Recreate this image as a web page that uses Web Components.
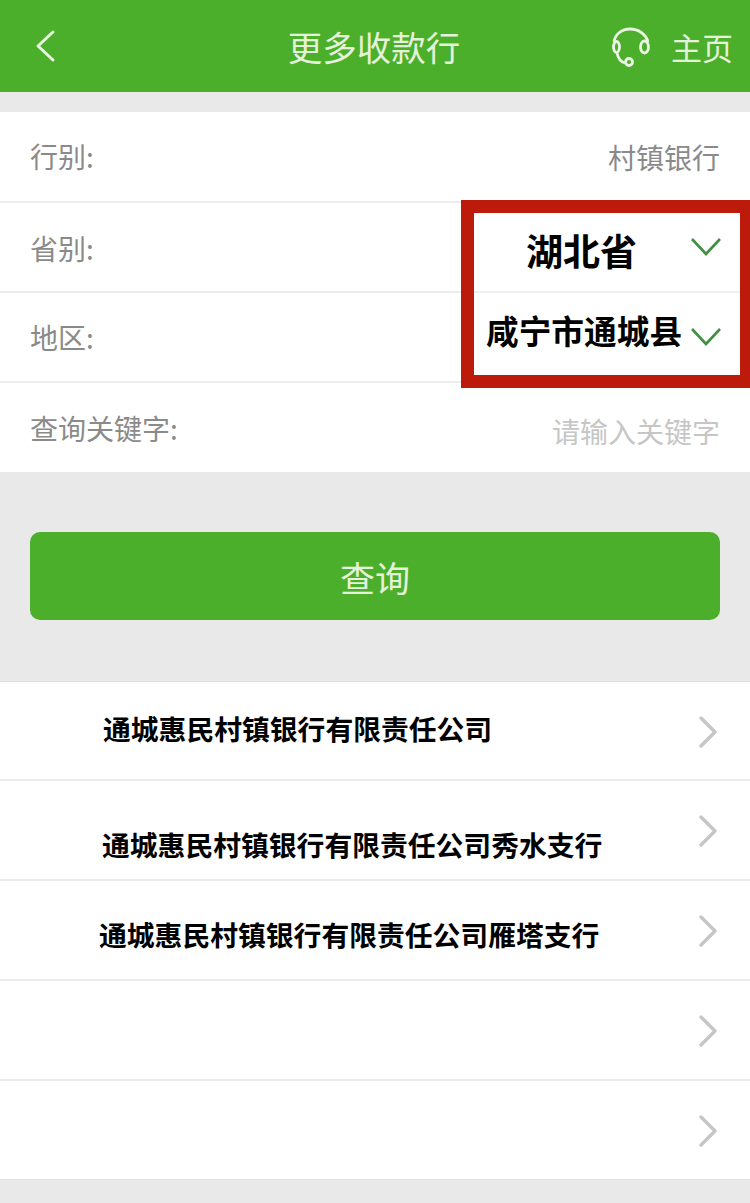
<!DOCTYPE html>
<html lang="zh"><head><meta charset="utf-8"><title>更多收款行</title>
<style>
html,body{margin:0;padding:0;background:#e9e9e9;font-family:"Noto Sans CJK SC","Noto Sans",sans-serif;overflow:hidden}
body{width:750px;height:1203px}
</style></head><body>
<bank-page>
  <app-bar slot="bar" home="主页">更多收款行</app-bar>
  <form-card slot="form">
    <form-row style="--h:89px;--drop:2px" label="行别:" value="村镇银行"></form-row>
    <form-row style="--h:90px;--lift:2px" label="省别:" ruled></form-row>
    <form-row style="--h:90px" label="地区:" ruled></form-row>
    <form-row style="--h:91px" label="查询关键字:" value="请输入关键字" placeholder ruled></form-row>
    <region-callout slot="over" province="湖北省" area="咸宁市通城县"></region-callout>
  </form-card>
  <query-button slot="action">查询</query-button>
  <bank-list slot="list">
    <bank-row style="--h:97px;--shift:-6px;--pad:103px">通城惠民村镇银行有限责任公司</bank-row>
    <bank-row style="--h:98px;--shift:28px;--pad:102px">通城惠民村镇银行有限责任公司秀水支行</bank-row>
    <bank-row style="--h:98px;--shift:8px;--pad:99px">通城惠民村镇银行有限责任公司雁塔支行</bank-row>
    <bank-row style="--h:98px"></bank-row>
    <bank-row style="--h:98px" last></bank-row>
  </bank-list>
</bank-page>
<script>
const def=(name,css,html)=>{customElements.define(name,class extends HTMLElement{
  connectedCallback(){ if(this.shadowRoot)return; const r=this.attachShadow({mode:'open'});
    r.innerHTML='<style>'+css+'</style>'+(typeof html==='function'?html(this):html); }
});};
def('bank-page',`:host{display:block;width:750px;height:1203px;background:#e9e9e9}
 .gap1{height:20px}.gap2{height:60px}.gap3{height:61px}`,
 `<slot name="bar"></slot><div class="gap1"></div><slot name="form"></slot><div class="gap2"></div><slot name="action"></slot><div class="gap3"></div><slot name="list"></slot>`);
def('app-bar',`:host{display:grid;grid-template-columns:1fr auto 1fr;align-items:center;height:92px;background:#4caf2b;color:#e4f2da;box-sizing:border-box;padding:0 17px}
 .t{font-size:34.5px;line-height:92px;font-weight:400;margin-left:-2px}
 .back{display:block;width:24px;height:34px;margin-left:16px}
 .r{justify-self:end;display:flex;align-items:center;gap:16px;font-size:31px}
 svg{display:block;fill:none;stroke:#e9f4e2}`,
 el=>`<svg class="back" viewBox="0 0 24 34"><path d="M20 3 5 17l15 14" stroke-width="3" stroke-linecap="round" stroke-linejoin="round"/></svg>
 <div class="t"><slot></slot></div>
 <div class="r"><svg width="44" height="44" viewBox="0 0 44 44" stroke-width="2.8"><path d="M3 18C4 10 11 5 19 5s16 5 18 13"/><ellipse cx="5.5" cy="23" rx="3" ry="5.5"/><ellipse cx="33.5" cy="23" rx="4" ry="6"/><path d="M6 29c1 5 4 9 8 10"/><circle cx="18" cy="38" r="3.5"/></svg><span>${el.getAttribute('home')}</span></div>`);
def('form-card',`:host{display:block;position:relative;background:#fff}`,`<slot></slot><slot name="over"></slot>`);
def('form-row',`:host{display:flex;align-items:center;justify-content:space-between;height:var(--h,90px);box-sizing:border-box;padding:var(--lift,0) 30px var(--drop,0) 30px;font-size:28px;color:#8a8a8a}
 :host([ruled]){border-top:2px solid #ececec}
 .v{padding-top:2px}
 :host([placeholder]) .v{color:#c6c6c6;padding-top:6px}`,
 el=>`<span>${el.getAttribute('label')}</span><span class="v">${el.getAttribute('value')||''}</span>`);
def('region-callout',`:host{position:absolute;left:461px;top:88px;width:289px;height:188px;box-sizing:border-box;border:solid #bc1a0b;border-width:13px 10px 13px 13px;background:#fff;display:flex;flex-direction:column;color:#000;font-weight:700}
 .row{display:flex;align-items:center;position:relative}
 .a{height:78px;border-bottom:2px solid #efefef;font-size:37px;padding-left:52px}
 .b{flex:1;font-size:32.7px;padding-left:12px}
 svg{position:absolute;left:216px;fill:none;stroke:#3f9140;stroke-width:2.6;display:block}
 .a span{margin-top:-4px}.b span{margin-top:-9px}
 .a svg{top:24px}.b svg{top:34px}`,
 el=>{const c='<svg width="32" height="20" viewBox="0 0 32 20"><path d="M2 2 16 17 30 2"/></svg>';
  return `<div class="row a"><span>${el.getAttribute('province')}</span>${c}</div><div class="row b"><span>${el.getAttribute('area')}</span>${c}</div>`});
def('query-button',`:host{display:block;margin:0 30px;height:88px;border-radius:10px;background:#4caf2b;color:#e4f2da;font-size:35px;text-align:center;line-height:90px}`,`<slot></slot>`);
def('bank-list',`:host{display:block;background:#fff;border-top:1px solid #dedede}`,`<slot></slot>`);
def('bank-row',`:host{display:flex;align-items:center;justify-content:space-between;height:var(--h,98px);border-bottom:2px solid #ebebeb;padding:0 31px 0 var(--pad,103px);color:#000;font-size:27.8px;font-weight:700;background:#fff}
 :host([last]){border-bottom:1px solid #e3e3e3}
 .t{margin-top:var(--shift,0px);white-space:nowrap}
 svg{display:block;fill:none;stroke:#c6c6c6;stroke-width:3.4;stroke-linecap:round;stroke-linejoin:round;margin:2px 1px 0 0}`,
 `<span class="t"><slot></slot></span><svg width="20" height="32" viewBox="0 0 20 32"><path d="M3 2 17 16 3 30"/></svg>`);
</script>
</body></html>
